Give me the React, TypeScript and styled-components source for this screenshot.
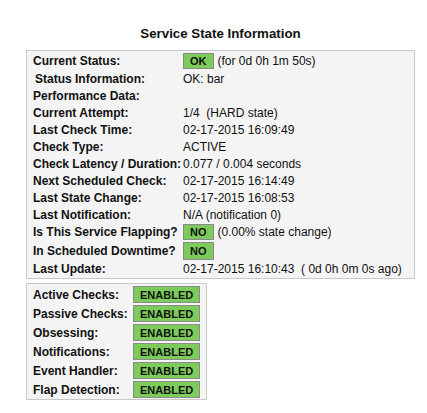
import styled, { createGlobalStyle } from "styled-components";

const GlobalStyle = createGlobalStyle`
  body {
    margin: 0;
    background: #ffffff;
    font-family: "Liberation Sans", Arial, sans-serif;
    color: #111;
  }
`;

const Page = styled.div`
  padding: 26px 0 0 26px;
  width: 389px;
`;

const Title = styled.div`
  font-size: 13.3px;
  font-weight: bold;
  line-height: 16px;
  text-align: center;
  margin-bottom: 8px;
`;

const Box = styled.div<{ $fit?: boolean }>`
  border: 1px solid #c9c9c9;
  background: #f4f4f4;
  padding: 1px 6px 0 6px;
  width: ${(p) => (p.$fit ? "fit-content" : "auto")};
`;

const ChecksBox = styled(Box)`
  margin-top: 4px;
`;

const Row = styled.div<{ $h: number; $labelWidth: number }>`
  display: grid;
  grid-template-columns: ${(p) => p.$labelWidth}px auto;
  align-items: center;
  height: ${(p) => p.$h}px;
  font-size: 12px;
`;

const Label = styled.div<{ $indent?: boolean }>`
  font-weight: bold;
  padding-left: ${(p) => (p.$indent ? 2 : 0)}px;
  white-space: nowrap;
`;

const Value = styled.div`
  display: flex;
  align-items: center;
  gap: 4px;
  white-space: pre;
`;

const Badge = styled.span<{ $h?: number }>`
  display: inline-flex;
  align-items: center;
  height: ${(p) => p.$h ?? 14}px;
  padding: 0 6px 0 6px;
  background: #7ccb5b;
  border: 1px solid #8a8a8a;
  font-size: 11px;
  font-weight: bold;
  color: #111;
`;

type Info = { label: string; value?: string; badge?: string; h: number; indent?: boolean };

const info: Info[] = [
  { label: "Current Status:", badge: "OK", value: "(for 0d 0h 1m 50s)", h: 18 },
  { label: "Status Information:", value: "OK: bar", h: 17, indent: true },
  { label: "Performance Data:", value: "", h: 17 },
  { label: "Current Attempt:", value: "1/4  (HARD state)", h: 17 },
  { label: "Last Check Time:", value: "02-17-2015 16:09:49", h: 17 },
  { label: "Check Type:", value: "ACTIVE", h: 17 },
  { label: "Check Latency / Duration:", value: "0.077 / 0.004 seconds", h: 17 },
  { label: "Next Scheduled Check:", value: "02-17-2015 16:14:49", h: 17 },
  { label: "Last State Change:", value: "02-17-2015 16:08:53", h: 17 },
  { label: "Last Notification:", value: "N/A (notification 0)", h: 17 },
  { label: "Is This Service Flapping?", badge: "NO", value: "(0.00% state change)", h: 18 },
  { label: "In Scheduled Downtime?", badge: "NO", h: 19 },
  { label: "Last Update:", value: "02-17-2015 16:10:43  ( 0d 0h 0m 0s ago)", h: 18 },
];

const checks = [
  "Active Checks:",
  "Passive Checks:",
  "Obsessing:",
  "Notifications:",
  "Event Handler:",
  "Flap Detection:",
];

const App = () => {
  return (
    <Page>
      <GlobalStyle />
      <Title>Service State Information</Title>
      <Box>
        {info.map((r) => (
          <Row key={r.label} $h={r.h} $labelWidth={150}>
            <Label $indent={r.indent}>{r.label}</Label>
            <Value>
              {r.badge && <Badge $h={r.h === 19 ? 16 : 14}>{r.badge}</Badge>}
              {r.value}
            </Value>
          </Row>
        ))}
      </Box>
      <ChecksBox $fit>
        {checks.map((c) => (
          <Row key={c} $h={19} $labelWidth={100}>
            <Label>{c}</Label>
            <Value>
              <Badge $h={15}>ENABLED</Badge>
            </Value>
          </Row>
        ))}
      </ChecksBox>
    </Page>
  );
};

export default App;
